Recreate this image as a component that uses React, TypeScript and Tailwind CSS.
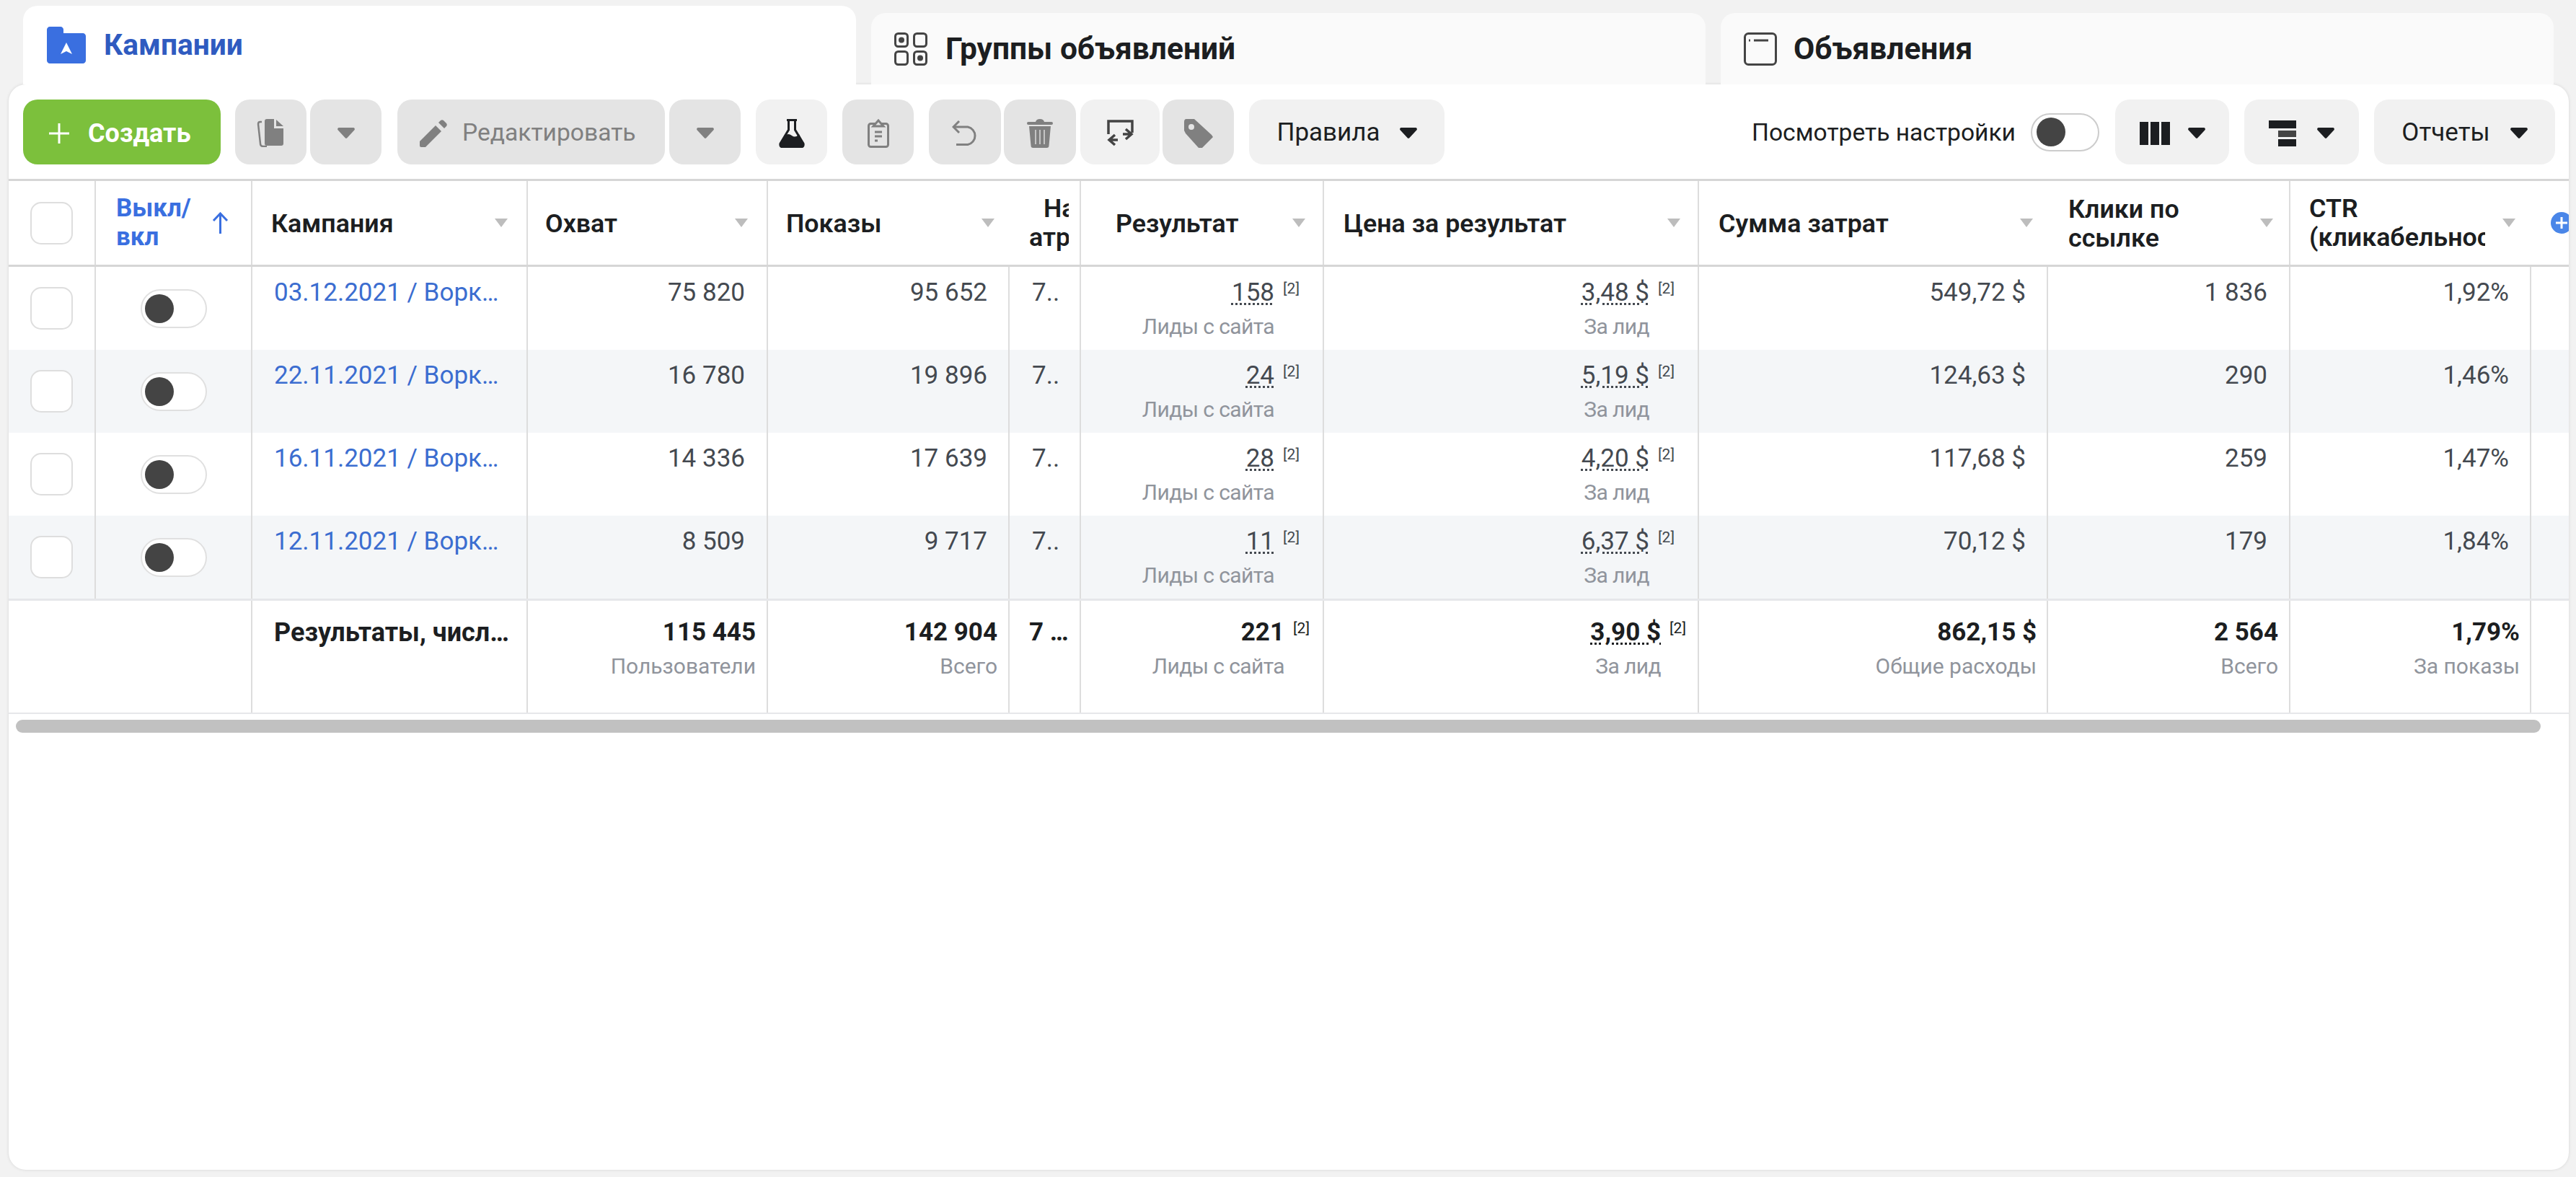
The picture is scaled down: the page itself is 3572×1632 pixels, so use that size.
import type { ReactNode } from 'react'

const gridCols = 'grid grid-cols-[121px_217px_382px_333px_335px_99px_337px_520px_484px_336px_334px_52px]'
const lineClass = 'border-r-2 border-[#dddddd]'
const softBtn = 'flex items-center justify-center h-[90px] pt-[3px] rounded-[20px] bg-[#e4e4e4]'
const plainBtn = 'flex items-center justify-center h-[90px] pt-[3px] rounded-[20px] bg-[#f1f1f1]'

const rows = [
  { name: '03.12.2021 / Ворк…', reach: '75 820', shows: '95 652', result: '158', cost: '3,48 $', spend: '549,72 $', clicks: '1 836', ctr: '1,92%' },
  { name: '22.11.2021 / Ворк…', reach: '16 780', shows: '19 896', result: '24', cost: '5,19 $', spend: '124,63 $', clicks: '290', ctr: '1,46%' },
  { name: '16.11.2021 / Ворк…', reach: '14 336', shows: '17 639', result: '28', cost: '4,20 $', spend: '117,68 $', clicks: '259', ctr: '1,47%' },
  { name: '12.11.2021 / Ворк…', reach: '8 509', shows: '9 717', result: '11', cost: '6,37 $', spend: '70,12 $', clicks: '179', ctr: '1,84%' },
]

function Caret({ dark }: { dark?: boolean }) {
  return (
    <svg width="24" height="15" viewBox="0 0 24 15" className="shrink-0">
      <path d="M2 0h20a2 2 0 0 1 1.5 3.2L13.5 14a2 2 0 0 1-3 0L.5 3.2A2 2 0 0 1 2 0z" fill={dark ? '#1c1e21' : '#808080'} />
    </svg>
  )
}

function SortCaret() {
  return (
    <svg width="18" height="12" viewBox="0 0 18 12" className="shrink-0">
      <path d="M0 0h18L9 12z" fill="#bdbdbd" />
    </svg>
  )
}

function Toggle({ size }: { size: 'sm' | 'lg' }) {
  return (
    <div className={size === 'lg' ? 'flex items-center w-[95px] h-[53px] pl-[6px] bg-white border-2 border-[#cccccc] rounded-full' : 'flex items-center w-[92px] h-[54px] pl-[4px] bg-white border-2 border-[#e0e0e0] rounded-full'}>
      <div className="w-[40px] h-[40px] rounded-full bg-[#444444]" />
    </div>
  )
}

function Checkbox() {
  return <div className="w-[59px] h-[59px] bg-white border-2 border-[#dedede] rounded-[15px]" />
}

function HeadCell({ children, line = true, pl = 'pl-[26px]', caret = 'pr-[26px]' }: { children: ReactNode; line?: boolean; pl?: string; caret?: string }) {
  return (
    <div className={`flex items-center justify-between ${pl} ${caret} ${line ? lineClass : ''}`}>
      <div className="pt-[2px] text-[35.8px] font-semibold text-[#1c1e21] leading-[40px]">{children}</div>
      <SortCaret />
    </div>
  )
}

function Value({ text, sub, bold, sup, dotted, pr }: { text: string; sub?: string; bold?: boolean; sup?: boolean; dotted?: boolean; pr: string }) {
  return (
    <div className={`flex flex-col items-end ${pr} ${lineClass} ${bold ? 'pt-[24px]' : 'pt-[16px]'}`}>
      <div className="flex items-start leading-[40px]">
        <span className={`${bold ? 'font-bold text-[#1c1e21]' : 'text-[#444950]'} ${dotted ? 'underline decoration-dotted decoration-[3px] underline-offset-[3px]' : ''}`}>{text}</span>
        {sup && <span className={`text-[21px] leading-[24px] mt-[2px] w-[35px] text-right ${bold ? 'text-[#1c1e21]' : 'text-[#444950]'}`}>[2]</span>}
      </div>
      {sub && <div className={`text-[30px] leading-[36px] mt-[9px] text-[#90949c] ${sup ? 'pr-[35px] tracking-[-0.6px]' : ''}`}>{sub}</div>}
    </div>
  )
}

export default function App() {
  return (
    <div className="w-[3572px] h-[1632px] bg-[#f2f2f2] text-[35px] font-[family-name:Roboto,sans-serif] overflow-hidden">

      {/* Tabs */}
      <div className="flex items-end h-[117px] pl-[32px] gap-[21px]">
        <div className="relative z-10 flex items-center w-[1155px] h-[109px] pl-[33px] bg-white rounded-t-[20px]">
          <svg width="54" height="51" viewBox="0 0 54 51" className="shrink-0">
            <path d="M4 0h15c2 0 4 2 4 4v5h27c2 0 4 2 4 4v34c0 2-2 4-4 4H4c-2 0-4-2-4-4V4c0-2 2-4 4-4z" fill="#3a6fe0" />
            <path d="M27 22l-8 16 8-4 8 4z" fill="#ffffff" />
          </svg>
          <span className="ml-[25px] text-[40.7px] font-bold text-[#2f5bc0]">Кампании</span>
        </div>
        <div className="flex items-center w-[1157px] h-[99px] pl-[32px] bg-[#fafafa] rounded-t-[20px]">
          <svg width="46" height="46" viewBox="0 0 46 46" fill="none" stroke="#444444" strokeWidth="3" className="shrink-0">
            <rect x="1.5" y="1.5" width="17" height="18" rx="4" />
            <rect x="27.5" y="1.5" width="17" height="18" rx="4" />
            <rect x="1.5" y="26.5" width="17" height="18" rx="4" />
            <rect x="27.5" y="26.5" width="17" height="18" rx="4" />
            <circle cx="10" cy="10.5" r="4" fill="#444444" stroke="none" />
            <circle cx="36" cy="35.5" r="4" fill="#444444" stroke="none" />
          </svg>
          <span className="ml-[25px] text-[42.5px] font-bold text-[#1c1e21]">Группы объявлений</span>
        </div>
        <div className="flex items-center w-[1155px] h-[99px] pl-[32px] bg-[#fafafa] rounded-t-[20px]">
          <svg width="46" height="46" viewBox="0 0 46 46" fill="none" stroke="#444444" strokeWidth="3" className="shrink-0">
            <rect x="1.5" y="1.5" width="43" height="43" rx="5" />
            <path d="M14 11h20" />
            <path d="M7 11h2" />
          </svg>
          <span className="ml-[23px] text-[42.5px] font-bold text-[#1c1e21]">Объявления</span>
        </div>
      </div>

      {/* Main card */}
      <div className="w-[3550px] h-[1505px] ml-[12px] bg-white rounded-[24px] shadow-[0_0_4px_rgba(0,0,0,0.12)] overflow-hidden">

        {/* Toolbar */}
        <div className="flex h-[131px] pt-[21px] pl-[20px] pr-[19px]">
          <div className="flex items-center justify-start w-[274px] h-[90px] pt-[3px] pl-[35px] rounded-[20px] bg-[#7cc03c] text-white text-[36px] font-bold">
            <svg width="30" height="30" viewBox="0 0 30 30" stroke="#ffffff" strokeWidth="3" className="mr-[25px]">
              <path d="M15 1v28M1 15h28" />
            </svg>
            Создать
          </div>

          <div className={`${softBtn} w-[99px] ml-[20px]`}>
            <svg width="40" height="39" viewBox="0 0 40 39">
              <path d="M7 4H4.5Q2 4 2 7l3 27q0 4 4 4h5" fill="none" stroke="#808080" strokeWidth="2.5" />
              <path d="M11 3q0-3 3-3h10v13h13v21q0 3-3 3H14q-3 0-3-3z" fill="#808080" />
              <path d="M27 1l10 9H27z" fill="#808080" />
            </svg>
          </div>
          <div className={`${softBtn} w-[99px] ml-[5px]`}><Caret /></div>

          <div className={`${softBtn} !justify-start w-[371px] ml-[22px] pl-[31px] text-[33.6px] text-[#808080]`}>
            <svg width="38" height="38" viewBox="0 0 38 38" fill="#808080" className="mr-[21px]">
              <path d="M0 30L22 8l8 8L8 38H2q-2 0-2-2z" />
              <path d="M26 4l3-3q2-1.500 4 0l4 4q1.500 2 0 4l-3 3z" />
            </svg>
            Редактировать
          </div>
          <div className={`${softBtn} w-[99px] ml-[6px]`}><Caret /></div>

          <div className={`${plainBtn} w-[99px] ml-[21px]`}>
            <svg width="36" height="40" viewBox="0 0 36 40">
              <path d="M11 1.500h14M13.500 2v13L2 34q-1 5 4 5h24q5 0 4-5L22.500 15V2" fill="none" stroke="#1c1e21" strokeWidth="3" />
              <path d="M8 23q5-4 10 0t10-2l6 13q1 5-4 5H6q-5 0-4-5z" fill="#1c1e21" />
            </svg>
          </div>
          <div className={`${softBtn} w-[99px] ml-[21px]`}>
            <svg width="30" height="40" viewBox="0 0 30 40" fill="none" stroke="#808080" strokeWidth="3">
              <rect x="1.500" y="6.500" width="27" height="32" rx="3" />
              <path d="M8 10l7-8 7 8z" fill="#e4e4e4" />
              <path d="M10 18h10M10 24h10M10 30h4" />
            </svg>
          </div>

          <div className={`${softBtn} w-[100px] ml-[21px]`}>
            <svg width="36" height="35" viewBox="0 0 36 35" fill="none" stroke="#808080" strokeWidth="3">
              <path d="M10 1L2 9l8 8" />
              <path d="M2 9h20a12.500 12.500 0 0 1 0 24.500H6" />
            </svg>
          </div>
          <div className={`${softBtn} w-[100px] ml-[4px]`}>
            <svg width="36" height="40" viewBox="0 0 36 40" fill="#808080">
              <path d="M12 4q1-4 6-4t6 4z" />
              <rect x="0" y="4" width="36" height="4" rx="2" />
              <path d="M3 10h30l-2.500 27q0 3-3 3h-19q-3 0-3-3z" />
              <path d="M12 15v20M18 15v20M24 15v20" stroke="#c4c4c4" strokeWidth="2" />
            </svg>
          </div>

          <div className={`${plainBtn} w-[110px] ml-[6px]`}>
            <svg width="37" height="38" viewBox="0 0 37 38" fill="none" stroke="#444444" strokeWidth="3.500">
              <path d="M2 20V2h33v16" />
              <path d="M22 20h11M26 13l8 7-8 7" />
              <path d="M15 28H4M11 21l-8 7 8 7" />
            </svg>
          </div>
          <div className={`${softBtn} w-[99px] ml-[4px]`}>
            <svg width="40" height="40" viewBox="0 0 40 40">
              <path d="M3 0h11l24 22 2 3-15 15h-5L2 20l-2-4V4q0-4 3-4z" fill="#808080" />
              <circle cx="10" cy="11" r="4" fill="#e4e4e4" />
            </svg>
          </div>

          <div className={`${plainBtn} w-[271px] ml-[21px] text-[#1c1e21]`}>
            Правила
            <span className="ml-[27px]"><Caret dark /></span>
          </div>

          <div className="flex items-center h-[90px] ml-auto text-[33.6px] text-[#1c1e21]">
            <span className="pt-[3px]">Посмотреть настройки</span>
            <div className="ml-[21px]"><Toggle size="lg" /></div>
          </div>
          <div className={`${plainBtn} w-[158px] ml-[22px]`}>
            <svg width="42" height="32" viewBox="0 0 42 32" fill="#1c1e21" className="mr-[25px]">
              <rect x="0" y="0" width="12" height="32" />
              <rect x="15" y="0" width="12" height="32" />
              <rect x="30" y="0" width="12" height="32" />
            </svg>
            <Caret dark />
          </div>
          <div className={`${plainBtn} w-[159px] ml-[21px]`}>
            <svg width="38" height="36" viewBox="0 0 38 36" fill="#1c1e21" className="mr-[29px]">
              <rect x="0" y="0" width="38" height="11" />
              <rect x="13" y="14" width="25" height="9" fill="#444444" />
              <rect x="13" y="26" width="25" height="10" />
            </svg>
            <Caret dark />
          </div>
          <div className={`${plainBtn} w-[251px] ml-[21px] text-[#1c1e21]`}>
            Отчеты
            <span className="ml-[28px]"><Caret dark /></span>
          </div>
        </div>

        {/* Table header */}
        <div className={`${gridCols} h-[122px] border-y-[3px] border-[#d6d6d6]`}>
          <div className={`flex items-center pl-[30px] ${lineClass}`}><Checkbox /></div>
          <div className={`flex items-center justify-between pl-[28px] pr-[29px] ${lineClass}`}>
            <div className="font-bold text-[#3a6fe0] leading-[40px]">Выкл/<br />вкл</div>
            <svg width="27" height="30" viewBox="0 0 27 30" fill="none" stroke="#3a6fe0" strokeWidth="3">
              <path d="M13.500 30V2M4 12l9.500-10L23 12" />
            </svg>
          </div>
          <HeadCell pl="pl-[26px]">Кампания</HeadCell>
          <HeadCell pl="pl-[24px]">Охват</HeadCell>
          <HeadCell line={false} pl="pl-[25px]" caret="pr-[21px]">Показы</HeadCell>
          <div className={`flex items-center pl-[27px] ${lineClass}`}>
            <div className="w-[55px] overflow-hidden text-[35.8px] font-semibold text-[#1c1e21] leading-[40px] whitespace-nowrap">
              <div className="pl-[20px]">Настройка</div>
              <div>атрибуции</div>
            </div>
          </div>
          <HeadCell pl="pl-[48px]" caret="pr-[24px]">Результат</HeadCell>
          <HeadCell pl="pl-[27px]" caret="pr-[24px]">Цена за результат</HeadCell>
          <HeadCell line={false} pl="pl-[27px]" caret="pr-[21px]">Сумма затрат</HeadCell>
          <HeadCell pl="pl-[28px]" caret="pr-[22px]">Клики по<br />ссылке</HeadCell>
          <div className="flex items-center justify-between pl-[26px] pr-[22px]">
            <div className="w-[244px] overflow-hidden text-[35.8px] font-semibold text-[#1c1e21] leading-[40px] whitespace-nowrap">CTR<br />(кликабельность</div>
            <SortCaret />
          </div>
          <div className="flex items-center pl-[27px] overflow-hidden">
            <svg width="30" height="30" viewBox="0 0 30 30" className="shrink-0">
              <circle cx="15" cy="15" r="15" fill="#4a86e8" />
              <path d="M15 7v16M7 15h16" stroke="#ffffff" strokeWidth="3" />
            </svg>
          </div>
        </div>

        {/* Rows */}
        {rows.map((row, i) => (
          <div key={row.name} className={`${gridCols} h-[115px] ${i % 2 === 1 ? 'bg-[#f4f6f8]' : 'bg-white'}`}>
            <div className={`flex items-center pl-[30px] ${lineClass}`}><Checkbox /></div>
            <div className={`flex items-center justify-center ${lineClass}`}><Toggle size="sm" /></div>
            <div className={`pl-[30px] pt-[16px] leading-[40px] text-[#3b6dd0] whitespace-nowrap ${lineClass}`}>{row.name}</div>
            <Value text={row.reach} pr="pr-[30px]" />
            <Value text={row.shows} pr="pr-[29px]" />
            <div className={`pl-[31px] pt-[16px] leading-[40px] text-[#444950] ${lineClass}`}>7..</div>
            <Value text={row.result} sub="Лиды с сайта" sup dotted pr="pr-[32px]" />
            <Value text={row.cost} sub="За лид" sup dotted pr="pr-[32px]" />
            <Value text={row.spend} pr="pr-[29px]" />
            <Value text={row.clicks} pr="pr-[30px]" />
            <Value text={row.ctr} pr="pr-[29px]" />
            <div />
          </div>
        ))}

        {/* Totals */}
        <div className={`${gridCols} h-[160px] border-t-[3px] border-b-2 border-[#e6e7ea]`}>
          <div className={`col-span-2 ${lineClass}`} />
          <div className={`pl-[30px] pt-[24px] text-[36px] leading-[40px] font-bold text-[#1c1e21] whitespace-nowrap ${lineClass}`}>Результаты, числ…</div>
          <Value text="115 445" sub="Пользователи" bold pr="pr-[15px]" />
          <Value text="142 904" sub="Всего" bold pr="pr-[15px]" />
          <div className={`pl-[27px] pt-[24px] leading-[40px] font-bold text-[#1c1e21] ${lineClass}`}>7 …</div>
          <Value text="221" sub="Лиды с сайта" bold sup pr="pr-[18px]" />
          <Value text="3,90 $" sub="За лид" bold sup dotted pr="pr-[16px]" />
          <Value text="862,15 $" sub="Общие расходы" bold pr="pr-[14px]" />
          <Value text="2 564" sub="Всего" bold pr="pr-[15px]" />
          <Value text="1,79%" sub="За показы" bold pr="pr-[14px]" />
          <div />
        </div>

        {/* Scrollbar */}
        <div className="w-[3501px] h-[18px] mt-[8px] ml-[10px] bg-[#c1c1c1] rounded-full" />
      </div>
    </div>
  )
}
